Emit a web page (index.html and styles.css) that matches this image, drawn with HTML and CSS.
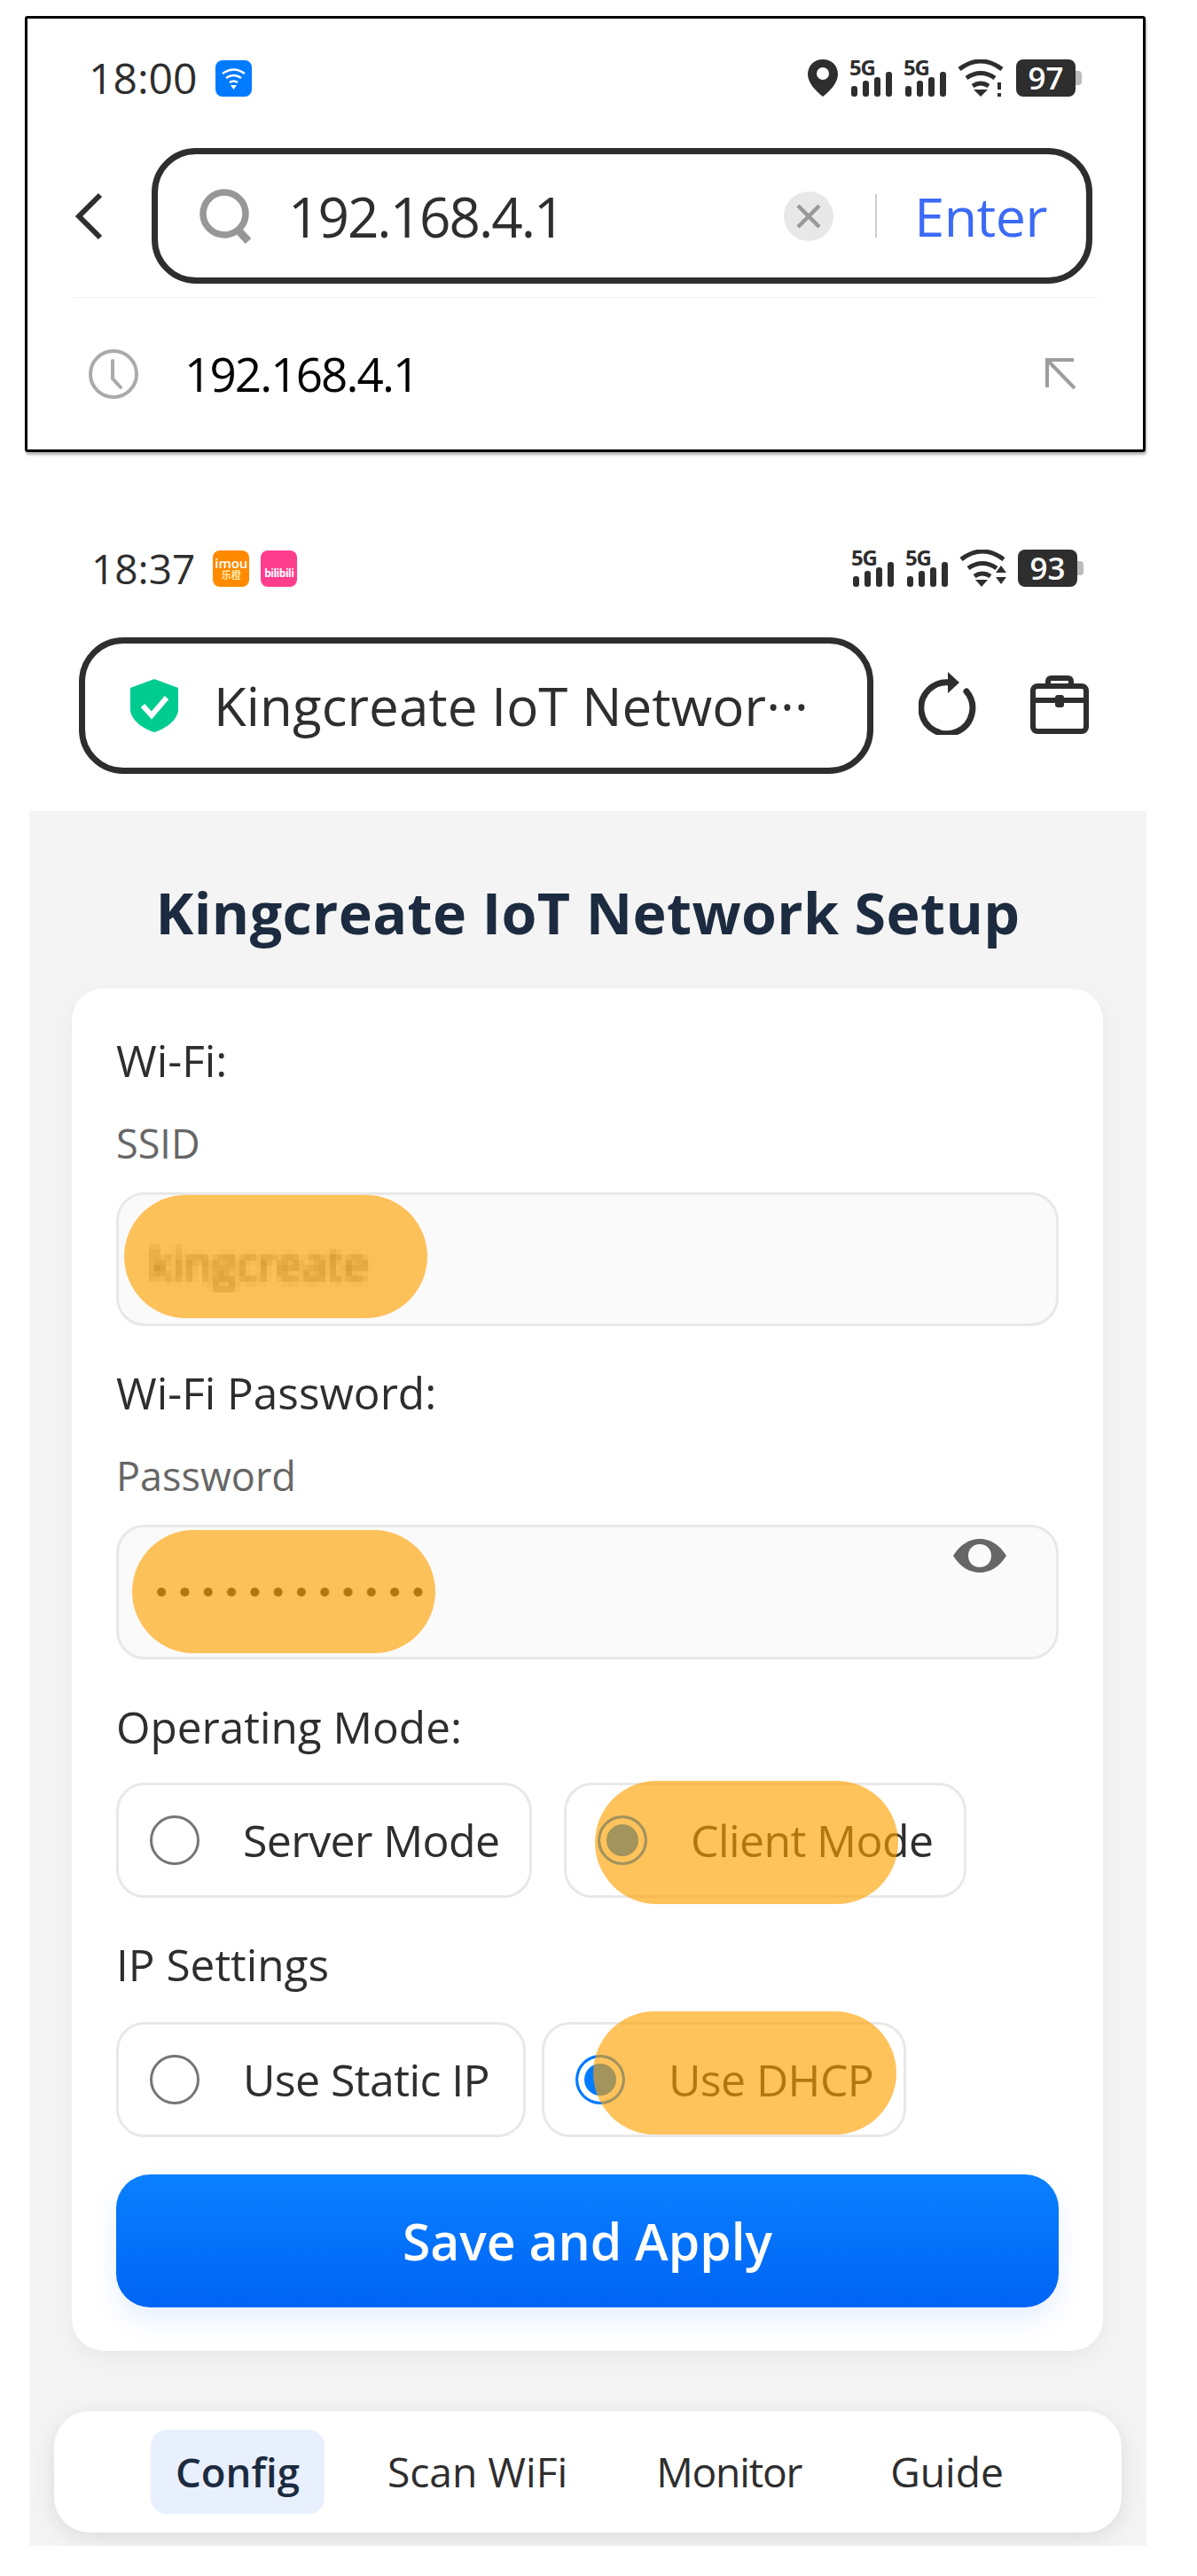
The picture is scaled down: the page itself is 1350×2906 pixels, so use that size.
FILE: index.html
```html
<!DOCTYPE html>
<html lang="en">
  <head>
    <meta charset="UTF-8" />
    <title>Kingcreate IoT Network Setup</title>
    <link rel="stylesheet" href="styles.css">
  </head>
  <body>
    <svg class="defs" width="0" height="0">
      <filter id="pixelate" x="0" y="0" width="100%" height="100%">
        <feGaussianBlur in="SourceGraphic" stdDeviation="3" result="smooth" />
        <feFlood x="3" y="3" width="1" height="1" />
        <feComposite width="6" height="6" />
        <feTile result="grid" />
        <feComposite in="smooth" in2="grid" operator="in" />
        <feMorphology operator="dilate" radius="3" />
      </filter>
    </svg>

    <!-- first screenshot: browser search -->
    <section class="shot">
      <div class="status">
        <span class="clock">18:00</span>
        <span class="badge badge-wifi">
          <svg viewBox="0 0 41 40" width="41" height="40">
            <path d="M8 15q12.500-9 25 0M12 20q8.500-6 17 0M16 25q4.500-3 9 0" fill="none" stroke="#fff" stroke-width="2.500" />
            <path d="M17 28h7l-3.500 5z" fill="#fff" />
          </svg>
        </span>
        <span class="status-right">
          <svg viewBox="0 0 36 42" width="36" height="42">
            <path d="M18 0C8 0 1 7 1 17c0 9 9 19 17 25 8-6 17-16 17-25C35 7 28 0 18 0z" fill="#2e2e2e" />
            <circle cx="18" cy="16" r="7" fill="#fff" />
          </svg>
          <span class="net"><span class="net-5g">5G</span><span class="bars"><i class="b1"></i><i class="b2"></i><i class="b3"></i><i class="b4"></i></span></span>
          <span class="net"><span class="net-5g">5G</span><span class="bars"><i class="b1"></i><i class="b2"></i><i class="b3"></i><i class="b4"></i></span></span>
          <svg viewBox="0 0 54 42" width="54" height="42">
            <path d="M2 11q24-18 48 0M10 21q16-11 32 0M17 30q9-6 18 0" fill="none" stroke="#2e2e2e" stroke-width="5" />
            <path d="M18 34h16l-8 8z" fill="#2e2e2e" />
            <path d="M47 26v8M47 38v4" stroke="#2e2e2e" stroke-width="4" />
          </svg>
          <span class="battery">97</span>
        </span>
      </div>

      <div class="search-row">
        <svg class="back" viewBox="0 0 32 54" width="32" height="54">
          <path d="M29 3L5 27l24 24" fill="none" stroke="#2e2e2e" stroke-width="6" />
        </svg>
        <div class="search-box">
          <svg viewBox="0 0 60 62" width="60" height="62">
            <circle cx="29" cy="28" r="24" fill="none" stroke="#979797" stroke-width="7.500" />
            <path d="M44 46l12 13" stroke="#979797" stroke-width="9" />
          </svg>
          <span class="query">192.168.4.1</span>
          <span class="clear">
            <svg viewBox="0 0 28 28" width="28" height="28">
              <path d="M2 2l24 24M26 2L2 26" stroke="#999" stroke-width="4.500" />
            </svg>
          </span>
          <span class="search-sep"></span>
          <span class="enter">Enter</span>
        </div>
      </div>

      <div class="history">
        <svg viewBox="0 0 56 56" width="56" height="56">
          <circle cx="28" cy="28" r="26" fill="none" stroke="#aaa" stroke-width="4" />
          <path d="M27 13v20l9 10" fill="none" stroke="#aaa" stroke-width="4" stroke-linecap="round" />
        </svg>
        <span class="history-text">192.168.4.1</span>
        <svg class="fill-arrow" viewBox="0 0 36 36" width="36" height="36">
          <path d="M33 2H3v31M3 2l31 32" fill="none" stroke="#9e9e9e" stroke-width="4" />
        </svg>
      </div>
    </section>

    <!-- second screenshot: setup page -->
    <div class="status status-two">
      <span class="clock">18:37</span>
      <span class="badge badge-imou">imou<small>乐橙</small></span>
      <span class="badge badge-bili">bilibili</span>
      <span class="status-right">
        <span class="net"><span class="net-5g">5G</span><span class="bars"><i class="b1"></i><i class="b2"></i><i class="b3"></i><i class="b4"></i></span></span>
        <span class="net"><span class="net-5g">5G</span><span class="bars"><i class="b1"></i><i class="b2"></i><i class="b3"></i><i class="b4"></i></span></span>
        <svg viewBox="0 0 54 42" width="54" height="42">
          <path d="M2 11q24-18 48 0M10 21q16-11 32 0M17 30q9-6 18 0" fill="none" stroke="#2e2e2e" stroke-width="5" />
          <path d="M18 34h14l-7 8z" fill="#2e2e2e" />
          <path d="M41 26l6-8 6 8zM41 31l6 8 6-8z" fill="#2e2e2e" />
        </svg>
        <span class="battery battery-low">93</span>
      </span>
    </div>

    <div class="url-row">
      <div class="url-box">
        <svg viewBox="0 0 54 60" width="54" height="60">
          <path d="M27 0l27 10v24c0 12-14 22-27 26C14 56 0 46 0 34V10z" fill="#00cc8f" />
          <path d="M14 30l10 11 17-20" fill="none" stroke="#fff" stroke-width="6" />
        </svg>
        <span class="url-text">Kingcreate IoT Networ···</span>
      </div>
      <svg class="refresh" viewBox="0 0 66 72" width="66" height="72">
        <path d="M54 23a29 29 0 1 1-18-10" fill="none" stroke="#2e2e2e" stroke-width="7" stroke-linecap="round" />
        <path d="M33 1l13 12-13 12z" fill="#2e2e2e" />
      </svg>
      <svg class="toolbox" viewBox="0 0 66 66" width="66" height="66">
        <rect x="3" y="12" width="60" height="51" rx="5" fill="none" stroke="#2e2e2e" stroke-width="6" />
        <path d="M3 28h60" stroke="#2e2e2e" stroke-width="6" />
        <path d="M20 11V7q0-4 4-4h18q4 0 4 4v4" fill="none" stroke="#2e2e2e" stroke-width="6" />
        <rect x="28" y="22" width="10" height="14" rx="3" fill="#2e2e2e" />
      </svg>
    </div>

    <main class="panel">
      <h1>Kingcreate IoT Network Setup</h1>

      <form class="card">
        <div class="field">
          <div class="label">Wi-Fi:</div>
          <div class="sublabel">SSID</div>
          <div class="input"><span class="blurred">kingcreate</span></div>
          <span class="mark mark-ssid"></span>
        </div>

        <div class="field field-pass">
          <div class="label">Wi-Fi Password:</div>
          <div class="sublabel">Password</div>
          <div class="input input-pass">
            <span class="dots"></span>
            <svg class="eye" viewBox="0 0 60 38" width="60" height="38">
              <path fill-rule="evenodd" d="M0 19C8 6 19 0 30 0s22 6 30 19c-8 13-19 19-30 19S8 32 0 19zM30 6c-8 0-13 6-13 13s5 13 13 13 13-6 13-13S38 6 30 6z" fill="#666" />
            </svg>
          </div>
          <span class="mark mark-pass"></span>
        </div>

        <div class="field field-mode">
          <div class="label">Operating Mode:</div>
          <div class="options">
            <div class="option option-server"><span class="radio"></span>Server Mode</div>
            <div class="option option-client"><span class="radio checked"></span>Client Mode</div>
          </div>
          <span class="mark mark-client"></span>
        </div>

        <div class="field field-ip">
          <div class="label">IP Settings</div>
          <div class="options">
            <div class="option option-static"><span class="radio"></span>Use Static IP</div>
            <div class="option option-dhcp"><span class="radio checked"></span>Use DHCP</div>
          </div>
          <span class="mark mark-dhcp"></span>
        </div>

        <button class="save" type="button">Save and Apply</button>
      </form>

      <nav class="tabs">
        <a class="tab active">Config</a>
        <a class="tab">Scan WiFi</a>
        <a class="tab tab-monitor">Monitor</a>
        <a class="tab">Guide</a>
      </nav>
    </main>
  </body>
</html>
```

FILE: styles.css
```css
:root {
  --ink: #2e2e2e;
  --line: #e8e8e8;
  --mark: rgba(255, 161, 0, 0.64);
}

* {
  box-sizing: border-box;
}

body {
  margin: 0;
  width: 1350px;
  height: 2906px;
  background: #fff;
  color: var(--ink);
  font-family: "Open Sans", "Noto Sans", sans-serif;
  overflow: hidden;
}

.defs {
  position: absolute;
}

/* first screenshot */
.shot {
  margin: 18px 58px 0 28px;
  height: 492px;
  border: 3px solid #000;
  border-radius: 3px;
  box-shadow: 1px 3px 3px rgba(0, 0, 0, 0.3);
}

.status {
  display: flex;
  align-items: center;
  height: 42px;
  margin-top: 46px;
  padding-left: 69px;
  padding-right: 69px;
}

.clock {
  font-size: 48px;
  font-weight: 500;
  line-height: 42px;
  margin-right: 21px;
}

.badge {
  display: flex;
  flex-direction: column;
  align-items: center;
  justify-content: center;
  width: 41px;
  height: 41px;
  border-radius: 8px;
  color: #fff;
  line-height: 1;
}

.badge-wifi {
  background: #007aff;
}

.badge-imou {
  background: #ff8a00;
  font-size: 15px;
  font-weight: 600;
  margin-right: 13px;
}

.badge-imou small {
  font-family: "Noto Sans CJK SC", sans-serif;
  font-size: 11px;
  color: #ffe9a8;
}

.badge-bili {
  justify-content: flex-end;
  padding-bottom: 9px;
  background: #ff3d8d;
  font-size: 12px;
  font-weight: 700;
  letter-spacing: -0.5px;
}

.status-right {
  display: flex;
  align-items: center;
  gap: 12px;
  margin-left: auto;
}

.net {
  display: flex;
  flex-direction: column;
  width: 49px;
  height: 42px;
  position: relative;
}

.net-5g {
  font-size: 24px;
  font-weight: 700;
  line-height: 17px;
  letter-spacing: -1.200px;
}

.bars {
  position: absolute;
  left: 2px;
  right: 1px;
  bottom: 0;
  display: flex;
  align-items: flex-end;
  gap: 6px;
}

.bars i {
  flex: 1;
  background: var(--ink);
  border-radius: 3px;
}

.b1 { height: 12px; }
.b2 { height: 18px; }
.b3 { height: 22px; }
.b4 { height: 28px; }

.battery {
  position: relative;
  width: 67px;
  height: 42px;
  margin-right: 7px;
  background: var(--ink);
  border-radius: 8px;
  color: #fff;
  font-size: 35px;
  font-weight: 600;
  line-height: 42px;
  text-align: center;
}

.battery::after {
  content: "";
  position: absolute;
  left: 67px;
  top: 13px;
  width: 7px;
  height: 16px;
  border-radius: 0 4px 4px 0;
  background: #bbb;
}

.search-row {
  display: flex;
  align-items: center;
  gap: 55px;
  margin-top: 58px;
  padding-left: 53px;
}

.search-box {
  display: flex;
  align-items: center;
  width: 1061px;
  height: 153px;
  border: 7px solid var(--ink);
  border-radius: 50px;
  padding-left: 46px;
}

.query {
  margin-left: 41px;
  font-size: 62px;
  letter-spacing: -2px;
  line-height: 1;
}

.clear {
  display: flex;
  align-items: center;
  justify-content: center;
  width: 56px;
  height: 56px;
  margin-left: auto;
  border-radius: 50%;
  background: var(--line);
}

.search-sep {
  width: 2px;
  height: 49px;
  margin-left: 47px;
  background: #ccc;
}

.enter {
  margin-left: 42px;
  margin-right: 44px;
  color: #3b6af5;
  font-size: 61px;
  letter-spacing: -0.5px;
  line-height: 1;
}

.history {
  display: flex;
  align-items: center;
  height: 172px;
  margin: 15px 52px 0 51px;
  padding-left: 18px;
  border-top: 1px solid #f2f2f2;
}

.history-text {
  margin-left: 52px;
  color: #000;
  font-size: 53px;
  letter-spacing: -1.900px;
}

.fill-arrow {
  margin-left: auto;
  margin-right: 23px;
}

/* second screenshot */
.status-two {
  margin-top: 110px;
  padding-left: 103px;
  padding-right: 128px;
}

.status-two .clock {
  font-size: 46px;
  margin-right: 20px;
}

.url-row {
  display: flex;
  align-items: center;
  margin-top: 57px;
  padding-left: 89px;
}

.url-box {
  display: flex;
  align-items: center;
  width: 896px;
  height: 154px;
  border: 7px solid var(--ink);
  border-radius: 50px;
  padding-left: 51px;
}

.url-text {
  margin-left: 40px;
  font-size: 60px;
  letter-spacing: 0.100px;
  white-space: nowrap;
}

.refresh {
  margin-left: 51px;
  margin-top: -6px;
}

.toolbox {
  margin-left: 60px;
  margin-top: -2px;
}

.panel {
  display: flow-root;
  width: 1260px;
  height: 1957px;
  margin: 42px 0 0 33px;
  background: #f4f4f4;
  overflow: hidden;
}

h1 {
  margin: 78px 0 0;
  color: #1c2b3f;
  font-size: 64.500px;
  font-weight: 700;
  line-height: 72px;
  letter-spacing: 0.4px;
  text-align: center;
}

.card {
  width: 1163px;
  height: 1537px;
  margin: 50px 0 0 48px;
  padding: 49px 50px 0;
  background: #fff;
  border-radius: 36px;
  box-shadow: 0 8px 26px rgba(0, 0, 0, 0.05);
}

.field {
  position: relative;
}

.label {
  font-size: 49.500px;
  line-height: 64px;
}

.sublabel {
  margin-top: 31px;
  color: #666;
  font-size: 45px;
  line-height: 62px;
}

.input {
  position: relative;
  width: 1063px;
  height: 151px;
  margin-top: 24px;
  background: #fafafa;
  border: 3px solid var(--line);
  border-radius: 32px;
}

.input-pass {
  height: 152px;
}

.field-pass {
  margin-top: 43px;
}

.blurred {
  position: absolute;
  left: 28px;
  top: 43px;
  padding: 0 6px;
  color: #666;
  font-size: 51px;
  line-height: 68px;
  filter: url(#pixelate);
}

.dots {
  position: absolute;
  left: 35px;
  top: 68px;
  width: 316px;
  height: 10px;
  background: radial-gradient(circle, #2e2e2e 4.500px, transparent 5.500px) 0 0 / 26.300px 10px repeat-x;
}

.eye {
  position: absolute;
  left: 941px;
  top: 13px;
}

.options {
  display: flex;
  gap: 36px;
  margin-top: 31px;
}

.option {
  display: flex;
  align-items: center;
  height: 130px;
  padding-left: 35px;
  background: #fff;
  border: 3px solid var(--line);
  border-radius: 32px;
  font-size: 50px;
  letter-spacing: -0.600px;
}

.option-server { width: 469px; }
.option-client { width: 454px; }
.option-static { width: 462px; }
.option-dhcp { width: 411px; margin-left: -18px; }

.radio {
  flex: none;
  width: 56px;
  height: 56px;
  margin-right: 49px;
  border: 3px solid #757575;
  border-radius: 50%;
}

.radio.checked {
  border-color: #007aff;
  background: #007aff;
  box-shadow: inset 0 0 0 7px #fff;
}

.field-mode {
  margin-top: 44px;
}

.field-ip {
  margin-top: 43px;
}

.field-ip .options {
  margin-top: 33px;
}

/* orange privacy marks drawn over the form */
.mark {
  position: absolute;
  width: 342px;
  height: 139px;
  border-radius: 70px;
  background: var(--mark);
}

.mark-ssid { left: 9px; top: 184px; }
.mark-pass { left: 18px; top: 187px; }
.mark-client { left: 540px; top: 93px; }
.mark-dhcp { left: 538px; top: 85px; }

.save {
  display: block;
  width: 1063px;
  height: 150px;
  margin-top: 42px;
  border: 0;
  border-radius: 38px;
  background: linear-gradient(#0a80ff, #0064f5);
  box-shadow: 0 14px 30px rgba(0, 100, 255, 0.1);
  color: #fff;
  font-family: inherit;
  font-size: 57px;
  font-weight: 600;
}

.tabs {
  display: flex;
  align-items: center;
  gap: 42px;
  width: 1204px;
  height: 137px;
  margin: 68px 0 0 28px;
  padding-left: 109px;
  background: #fff;
  border-radius: 40px;
  box-shadow: 0 6px 26px rgba(0, 0, 0, 0.1);
}

.tab {
  padding: 0 29px;
  font-size: 46.200px;
  line-height: 95px;
  white-space: nowrap;
}

.tab-monitor {
  letter-spacing: -1.200px;
}

.tab.active {
  padding: 0 28px;
  background: #e8effd;
  border-radius: 18px;
  color: #1c2b3f;
  font-size: 45.500px;
  font-weight: 600;
}
```
